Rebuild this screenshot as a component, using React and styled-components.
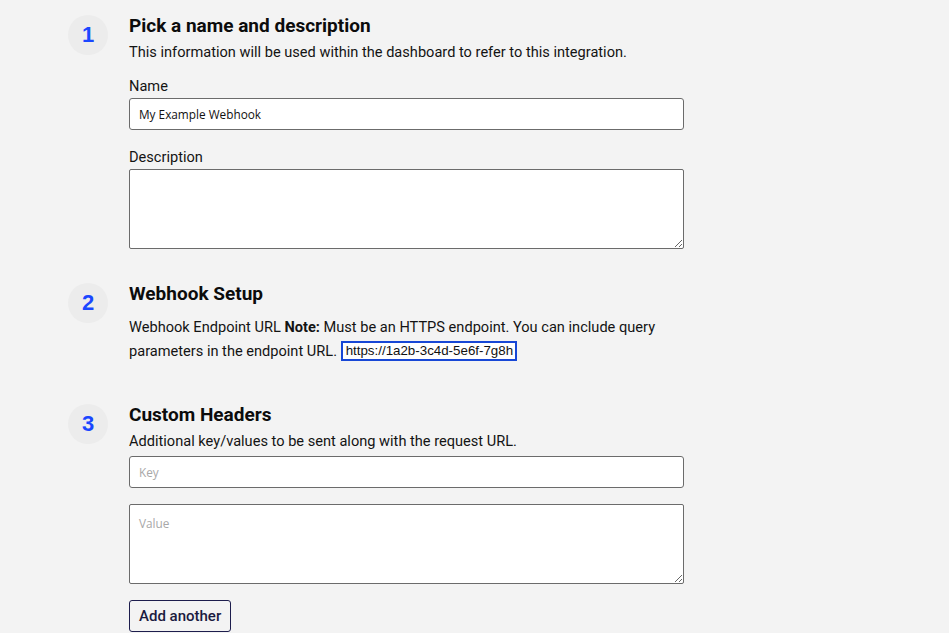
import React from "react";
import styled, { createGlobalStyle } from "styled-components";

const Global = createGlobalStyle`
  html, body { margin: 0; padding: 0; background: #f3f3f3; }
  body { font-family: Roboto, "Liberation Sans", sans-serif; color: #111; }
  * { box-sizing: border-box; }
`;

const Page = styled.div`
  display: flex;
  flex-direction: column;
  padding: 15px 0 0 68px;
`;

const Section = styled.section`
  display: flex;
  gap: 21px;
  margin-bottom: ${(p) => p.$mb || 0}px;
`;

const StepCircle = styled.div`
  flex: none;
  width: 40px;
  height: 40px;
  border-radius: 50%;
  background: #ececec;
  color: #1a47ff;
  font-family: "Liberation Sans", Arial, sans-serif;
  font-weight: 700;
  font-size: 22px;
  display: flex;
  align-items: center;
  justify-content: center;
`;

const Body = styled.div`
  width: 555px;
  display: flex;
  flex-direction: column;
`;

const Title = styled.h2`
  margin: 0;
  font-size: 19px;
  font-weight: 700;
  line-height: 22px;
  color: #0c0c0c;
`;

const Text = styled.p`
  margin: ${(p) => p.$mt ?? 3}px 0 0;
  font-size: 14.6px;
  line-height: 24px;
  color: #141414;
  b { font-weight: 700; }
`;

const Label = styled.label`
  display: block;
  font-size: 14.6px;
  line-height: 20px;
  margin: ${(p) => p.$mt || 0}px 0 2px;
  color: #141414;
`;

const Input = styled.input`
  display: block;
  width: 555px;
  height: 32px;
  margin-top: ${(p) => p.$mt || 0}px;
  border: 1px solid #6b6b6b;
  border-radius: 3px;
  background: #fff;
  padding: 0 9px;
  font-family: "Open Sans", "Liberation Sans", sans-serif;
  font-size: 11.8px;
  color: #111;
  &::placeholder { color: #a8a8a8; }
  &:focus { outline: none; }
`;

const Area = styled.textarea`
  display: block;
  width: 555px;
  height: 80px;
  margin-top: ${(p) => p.$mt || 0}px;
  border: 1px solid #6b6b6b;
  border-radius: 2px;
  background: #fff;
  padding: 10px 9px;
  font-family: "Open Sans", "Liberation Sans", sans-serif;
  font-size: 11.8px;
  resize: vertical;
  &::placeholder { color: #a8a8a8; }
  &:focus { outline: none; }
`;

const UrlInput = styled.input`
  width: 176px;
  height: 20px;
  border: 2px solid #1747d6;
  border-radius: 0;
  background: #fff;
  padding: 0 2px 0 3px;
  font-family: "Liberation Sans", Arial, sans-serif;
  font-size: 13.33px;
  line-height: 16px;
  color: #111;
  vertical-align: 1px;
  &:focus { outline: none; }
`;

const Button = styled.button`
  margin-top: 16px;
  align-self: flex-start;
  height: 32px;
  padding: 0 9px;
  border: 1px solid #1d1d4d;
  border-radius: 3px;
  background: transparent;
  color: #1b1b40;
  font-family: Roboto, "Liberation Sans", sans-serif;
  font-weight: 500;
  font-size: 15px;
`;

export default function App() {
  return (
    <>
      <Global />
      <Page>
        <Section $mb={34}>
          <StepCircle>1</StepCircle>
          <Body>
            <Title>Pick a name and description</Title>
            <Text>This information will be used within the dashboard to refer to this integration.</Text>
            <Label $mt={12}>Name</Label>
            <Input defaultValue="My Example Webhook" />
            <Label $mt={17}>Description</Label>
            <Area />
          </Body>
        </Section>
        <Section $mb={41}>
          <StepCircle>2</StepCircle>
          <Body>
            <Title>Webhook Setup</Title>
            <Text $mt={10}>
              Webhook Endpoint URL <b>Note:</b> Must be an HTTPS endpoint. You can include query parameters in the endpoint URL.{" "}
              <UrlInput defaultValue="https://1a2b-3c4d-5e6f-7g8h-9i0j" />
            </Text>
          </Body>
        </Section>
        <Section>
          <StepCircle>3</StepCircle>
          <Body>
            <Title>Custom Headers</Title>
            <Text>Additional key/values to be sent along with the request URL.</Text>
            <Input $mt={3} placeholder="Key" />
            <Area $mt={16} placeholder="Value" />
            <Button>Add another</Button>
          </Body>
        </Section>
      </Page>
    </>
  );
}
